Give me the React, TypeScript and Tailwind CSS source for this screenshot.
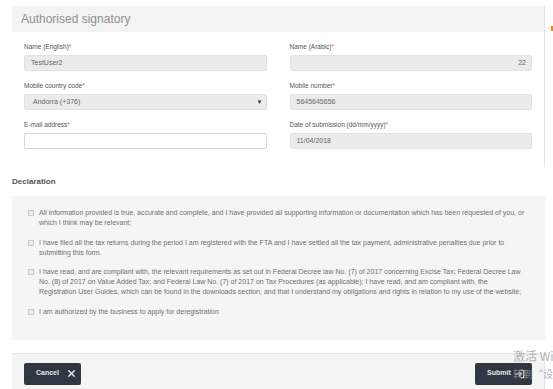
import { X, LogIn } from 'lucide-react';

interface FieldProps {
  label: string;
  value?: string;
  align?: 'left' | 'right';
  disabled?: boolean;
  select?: boolean;
}

function Field({ label, value = '', align = 'left', disabled = true, select = false }: FieldProps) {
  return (
    <div className="flex flex-col">
      <label className="h-[8px] text-[6.5px] leading-[8px] text-[#555]">
        {label}
        <span className="text-[#d9534f]">*</span>
      </label>
      <div
        className={`mt-[4px] flex h-[16px] items-center rounded-[2px] border text-[7px] text-[#666] ${
          disabled ? 'border-[#e2e2e2] bg-[#ebebeb]' : 'border-[#d6d6d6] bg-white'
        } ${align === 'right' ? 'justify-end pr-[5px]' : select ? 'justify-between pl-[8px] pr-[3px]' : 'pl-[6px]'}`}
      >
        <span>{value}</span>
        {select && <span className="text-[6px] text-[#333]">▼</span>}
      </div>
    </div>
  );
}

const declarations: string[][] = [
  [
    'All information provided is true, accurate and complete, and I have provided all supporting information or documentation which has been requested of you, or',
    'which I think may be relevant;',
  ],
  [
    'I have filed all the tax returns during the period I am registered with the FTA and I have settled all the tax payment, administrative penalties due prior to',
    'submitting this form.',
  ],
  [
    'I have read, and are compliant with, the relevant requirements as set out in Federal Decree law No. (7) of 2017 concerning Excise Tax; Federal Decree Law',
    'No. (8) of 2017 on Value Added Tax; and Federal Law No. (7) of 2017 on Tax Procedures (as applicable); I have read, and am compliant with, the',
    'Registration User Guides, which can be found in the downloads section; and that I understand my obligations and rights in relation to my use of the website;',
  ],
  ['I am authorized by the business to apply for deregistration'],
];

export default function App() {
  return (
    <div className="relative h-[389px] w-[553px] overflow-hidden bg-white font-['Liberation_Sans',Arial,sans-serif]">
      <div className="ml-[12px] w-[533px] pt-[6px]">
        <section className="border-r border-[#e4e4e4] pb-[18px]">
          <header className="flex h-[26px] items-center bg-[#f3f3f3] px-[9px] text-[12px] text-[#909090]">
            Authorised signatory
          </header>
          <div className="grid grid-cols-2 gap-x-[23px] gap-y-[11px] px-[12px] pt-[11px]">
            <Field label="Name (English)" value="TestUser2" />
            <Field label="Name (Arabic)" value="22" align="right" />
            <Field label="Mobile country code" value="Andorra (+376)" select />
            <Field label="Mobile number" value="5645645656" />
            <Field label="E-mail address" disabled={false} />
            <Field label="Date of submission (dd/mm/yyyy)" value="11/04/2018" />
          </div>
        </section>

        <h2 className="mt-[10px] text-[8px] font-bold leading-[10px] text-[#555]">Declaration</h2>

        <div className="mt-[9px] flex flex-col gap-[9.5px] bg-[#f5f5f5] pb-[23px] pl-[16px] pt-[12px]">
          {declarations.map((lines, i) => (
            <div key={i} className="flex items-start">
              <span className="mt-[2px] h-[6px] w-[6px] shrink-0 border border-[#c9c9c9] bg-[#ececec]" />
              <p className="ml-[5px] whitespace-nowrap text-[7px] leading-[10px] text-[#6f6f6f]">
                {lines.map((line, j) => (
                  <span key={j} className="block">
                    {line}
                  </span>
                ))}
              </p>
            </div>
          ))}
        </div>

        <div className="h-[14px] border-b border-[#e6e6e6]" />

        <footer className="flex h-[35px] items-start justify-between border-r border-[#e4e4e4] bg-[#f4f4f4] px-[12px] pt-[9px]">
          <button className="flex h-[22px] w-[57px] items-center justify-between rounded-[2px] bg-[#2f3742] pl-[12px] pr-[4px] text-[7px] font-bold text-[#e8e8e8]">
            Cancel
            <X size={11} strokeWidth={3} />
          </button>
          <button className="flex h-[22px] w-[57px] items-center justify-between rounded-[2px] bg-[#2f3742] pl-[12px] pr-[7px] text-[7px] font-bold text-[#e8e8e8]">
            Submit
            <LogIn size={10} strokeWidth={2.5} />
          </button>
        </footer>
      </div>

      <span className="absolute left-[551px] top-[26px] h-[5px] w-[2px] bg-[#e08a2c]" />

      <div className="pointer-events-none absolute left-[513px] top-[348px] font-['Noto_Sans_CJK_SC',sans-serif] text-[#a0a0a0]/80">
        <div className="whitespace-nowrap text-[12px] leading-[16px]">激活 Windows</div>
        <div className="mt-[3px] whitespace-nowrap text-[10px] leading-[14px]">转到“设置”以激活 Windows。</div>
      </div>
    </div>
  );
}
